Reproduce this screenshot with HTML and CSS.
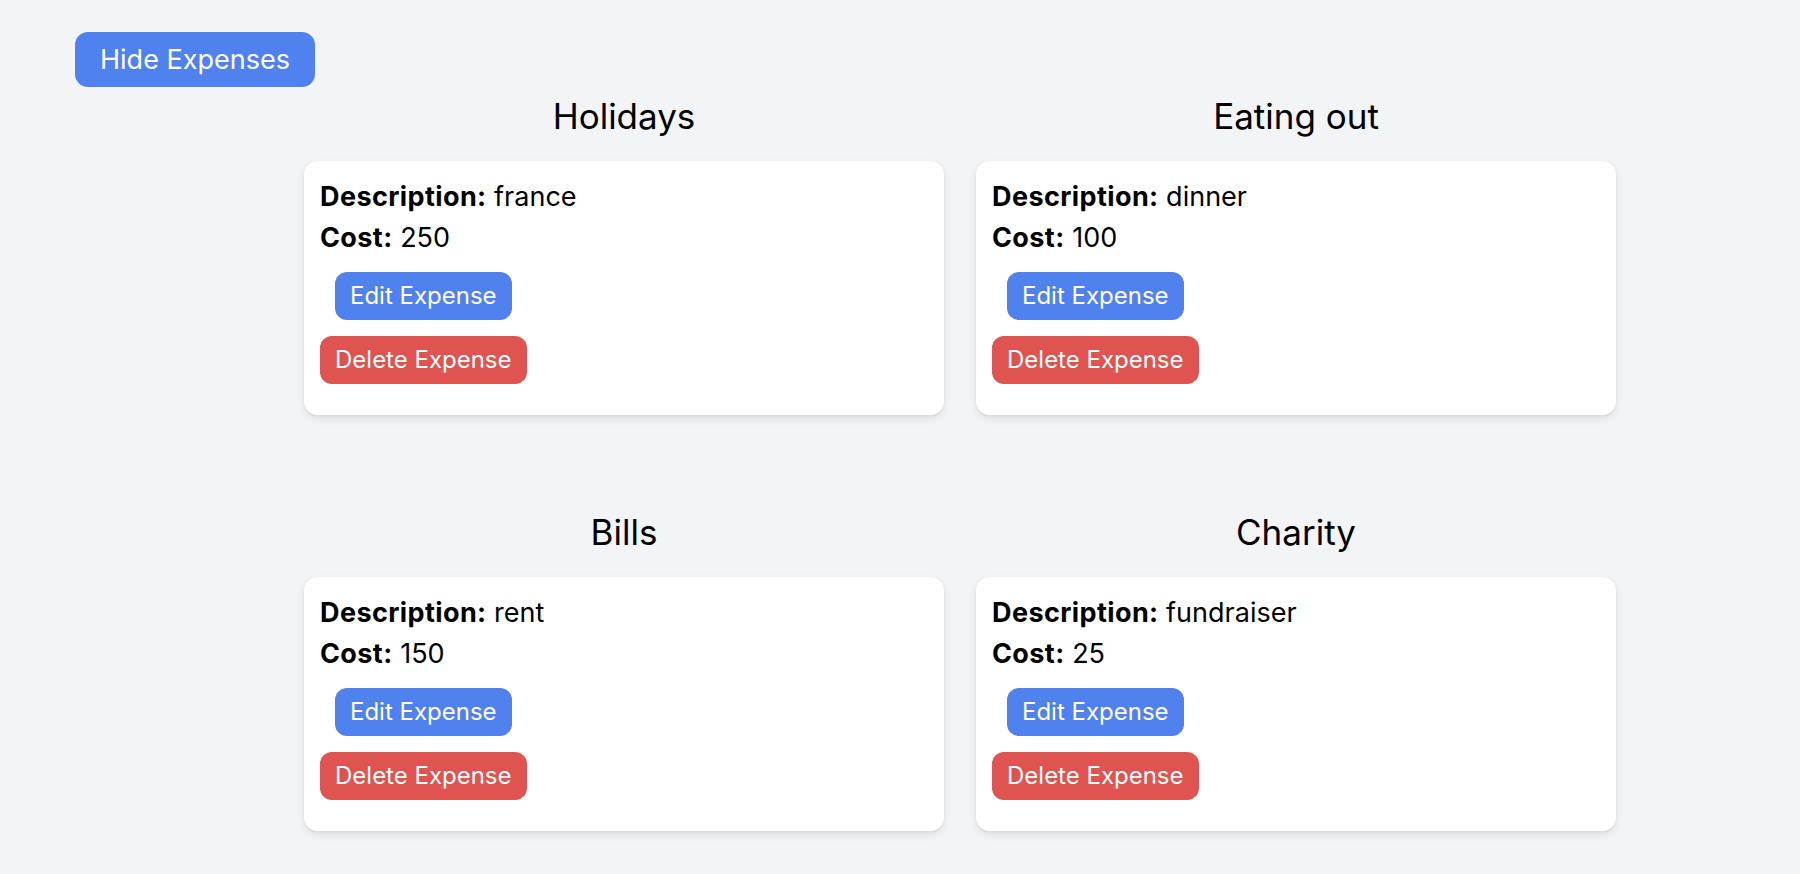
FILE: index.html
```html
<!DOCTYPE html>
<html lang="en">
<head>
<meta charset="utf-8">
<title>Expenses</title>
<link rel="stylesheet" href="styles.css">
</head>
<body>
<button class="btn btn-toggle">Hide Expenses</button>
<div class="grid">
  <section class="group">
    <h2 class="group-title">Holidays</h2>
    <div class="card">
      <p class="line"><strong>Description:</strong> france</p>
      <p class="line"><strong>Cost:</strong> 250</p>
      <div class="actions">
        <button class="btn btn-edit">Edit Expense</button>
        <button class="btn btn-delete">Delete Expense</button>
      </div>
    </div>
  </section>
  <section class="group">
    <h2 class="group-title">Eating out</h2>
    <div class="card">
      <p class="line"><strong>Description:</strong> dinner</p>
      <p class="line"><strong>Cost:</strong> 100</p>
      <div class="actions">
        <button class="btn btn-edit">Edit Expense</button>
        <button class="btn btn-delete">Delete Expense</button>
      </div>
    </div>
  </section>
  <section class="group">
    <h2 class="group-title">Bills</h2>
    <div class="card">
      <p class="line"><strong>Description:</strong> rent</p>
      <p class="line"><strong>Cost:</strong> 150</p>
      <div class="actions">
        <button class="btn btn-edit">Edit Expense</button>
        <button class="btn btn-delete">Delete Expense</button>
      </div>
    </div>
  </section>
  <section class="group">
    <h2 class="group-title">Charity</h2>
    <div class="card">
      <p class="line"><strong>Description:</strong> fundraiser</p>
      <p class="line"><strong>Cost:</strong> 25</p>
      <div class="actions">
        <button class="btn btn-edit">Edit Expense</button>
        <button class="btn btn-delete">Delete Expense</button>
      </div>
    </div>
  </section>
</div>
</body>
</html>
```
FILE: styles.css
```css
* { box-sizing: border-box; }
html, body { margin: 0; }
body {
  background: #f3f4f6;
  font-family: Inter, "Noto Sans", sans-serif;
  color: #000;
  padding: 32px 75px;
}
.btn {
  font-family: inherit;
  border: none;
  color: #fff;
  cursor: pointer;
  display: block;
}
.btn-toggle {
  background: #4f82ee;
  font-size: 27px;
  line-height: 33px;
  padding: 11px 25px;
  border-radius: 13px;
}
.grid {
  margin: 8px 0 0 229px;
  display: grid;
  grid-template-columns: 640px 640px;
  column-gap: 32px;
  row-gap: 96px;
}
.group-title {
  margin: 0 0 24px;
  font-size: 35px;
  line-height: 42px;
  font-weight: 400;
  text-align: center;
}
.card {
  background: #fff;
  border-radius: 14px;
  box-shadow: 0 4px 8px rgba(0,0,0,0.09), 0 1px 3px rgba(0,0,0,0.05);
  padding: 15px 16px 31px;
}
.line {
  margin: 0;
  font-size: 27px;
  line-height: 41px;
}
.line strong { font-weight: 700; letter-spacing: 0.4px; }
.actions {
  margin-top: 14px;
  display: flex;
  flex-direction: column;
  align-items: flex-start;
  gap: 16px;
}
.btn-edit, .btn-delete {
  font-size: 24px;
  line-height: 30px;
  padding: 9px 15px;
  border-radius: 12px;
}
.btn-edit { background: #4f82ee; margin-left: 15px; }
.btn-delete { background: #df5350; }
```
